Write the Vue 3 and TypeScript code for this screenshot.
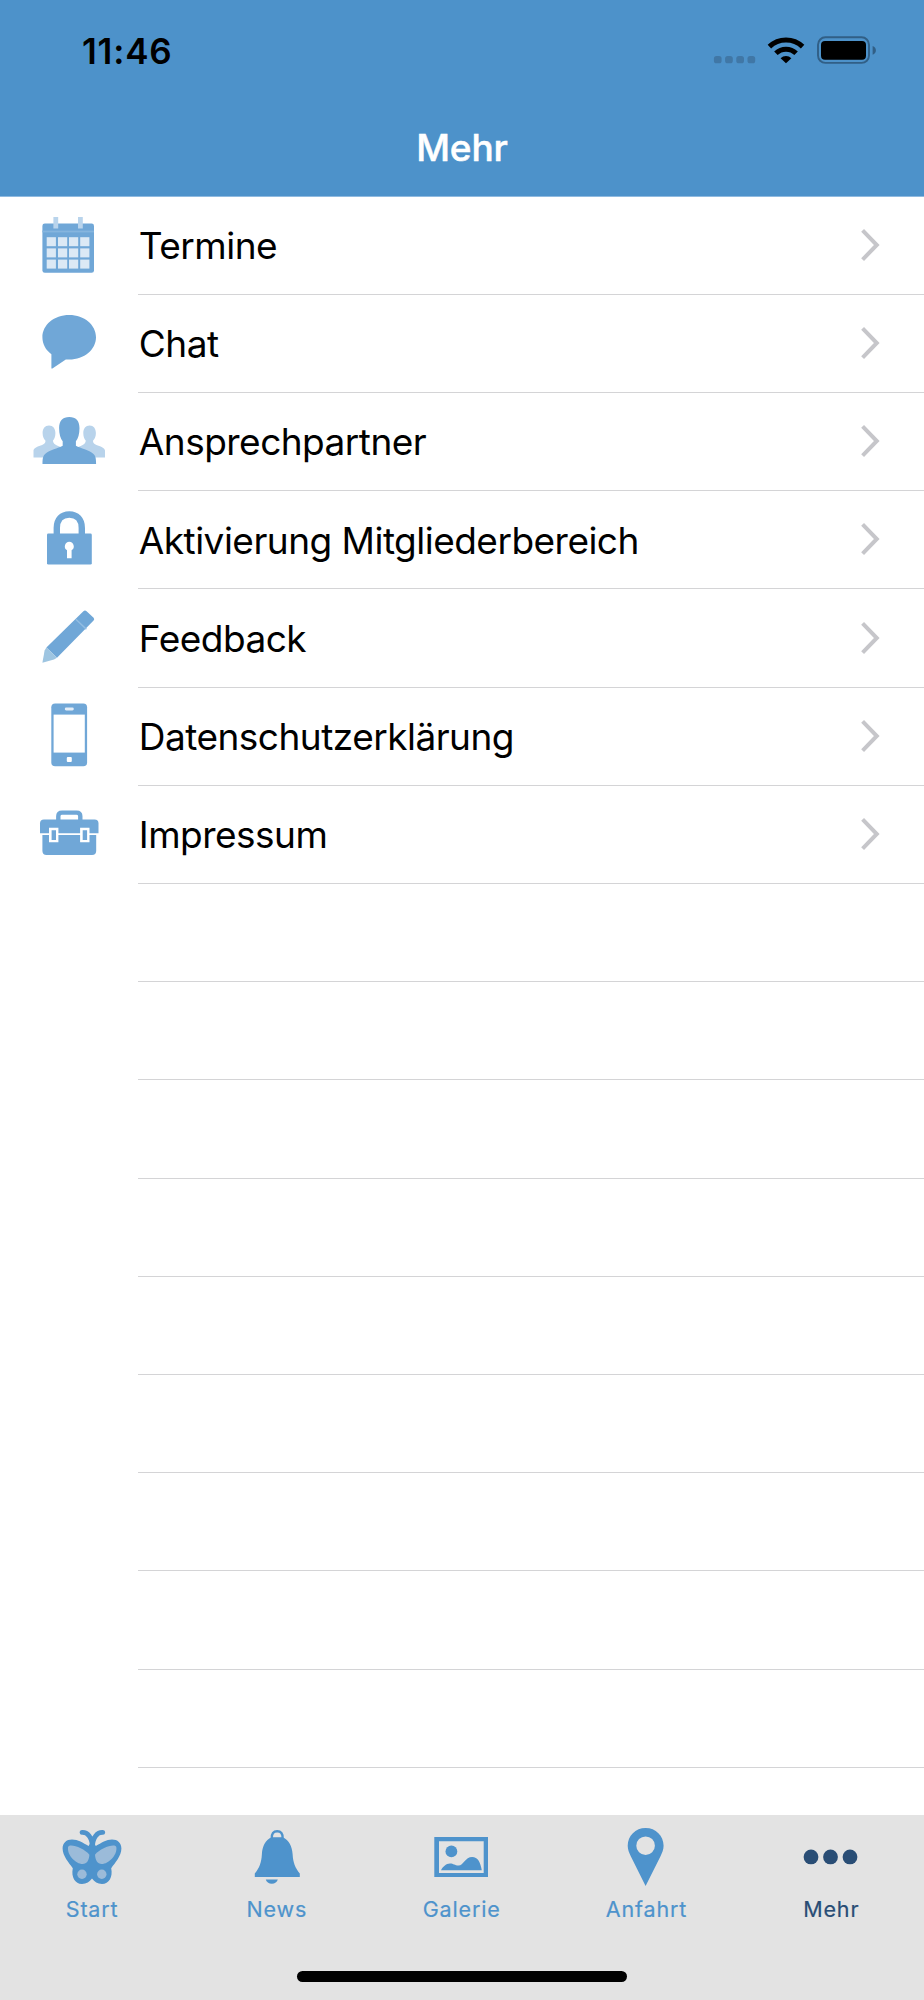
<script setup lang="ts">
interface Row {
  icon: string
  label: string
}

interface Tab {
  icon: string
  label: string
  active?: boolean
}

const rows: Row[] = [
  { icon: 'calendar', label: 'Termine' },
  { icon: 'chat', label: 'Chat' },
  { icon: 'people', label: 'Ansprechpartner' },
  { icon: 'lock', label: 'Aktivierung Mitgliederbereich' },
  { icon: 'pencil', label: 'Feedback' },
  { icon: 'phone', label: 'Datenschutzerklärung' },
  { icon: 'case', label: 'Impressum' },
]

const emptyRows = 9

const tabs: Tab[] = [
  { icon: 'butterfly', label: 'Start' },
  { icon: 'bell', label: 'News' },
  { icon: 'picture', label: 'Galerie' },
  { icon: 'pin', label: 'Anfahrt' },
  { icon: 'more', label: 'Mehr', active: true },
]

const cellColumns = [46.7, 58, 69, 80.2]
const cellRows = [40.2, 51.4, 62.6]
</script>

<template>
  <div class="screen">
    <header class="header">
      <div class="status">
        <span class="time">11:46</span>
        <svg class="indicators" viewBox="710 30 170 40" width="170" height="40">
          <g fill="#4077a6">
            <rect x="713.9" y="55.9" width="7.7" height="7.4" rx="2.6" />
            <rect x="725.1" y="55.9" width="7.7" height="7.4" rx="2.6" />
            <rect x="736.3" y="55.9" width="7.7" height="7.4" rx="2.6" />
            <rect x="747.5" y="55.9" width="7.7" height="7.4" rx="2.6" />
          </g>
          <g fill="none" stroke="#000" stroke-width="5">
            <path d="M769.4 46.6a24 24 0 0 1 33.2 0" />
            <path d="M775.9 53.3a14.6 14.6 0 0 1 20.2 0" />
          </g>
          <path d="M780.6 58.2a8 8 0 0 1 10.8 0L786 63.3z" />
          <rect x="818" y="37.3" width="51" height="25.6" rx="7.4" fill="none" stroke="#315f86" stroke-width="1.9" />
          <rect x="821" y="41" width="45" height="18.8" rx="4" />
          <path d="M872.6 45.9c4.4 1.6 4.4 7.2 0 8.8z" fill="#315f86" />
        </svg>
      </div>
      <h1 class="title">Mehr</h1>
    </header>

    <main class="list">
      <div v-for="row in rows" :key="row.label" class="row">
        <svg class="icon" viewBox="0 0 138 98.2" width="138" height="98.2" fill="#70a7d7">
          <template v-if="row.icon === 'calendar'">
            <rect x="42.4" y="26.6" width="51.6" height="49.2" rx="2.4" />
            <rect x="42.4" y="33.6" width="51.6" height="1.8" fill="#86b5de" />
            <path d="M53.4 20h4.8v11.4h-4.8zM78 20h4.8v11.4H78z" fill="#b9d4ec" />
            <template v-for="y in cellRows" :key="y">
              <rect v-for="x in cellColumns" :key="x" :x="x" :y="y" width="9.2" height="9" fill="#dce9f5" />
            </template>
          </template>
          <template v-else-if="row.icon === 'chat'">
            <path d="M69.2 20C84.4 20 96 30 96 42.3S84.4 64.6 69.2 64.6h-3.4L52.4 73.4 51.4 73.4V59.2C45.8 55.2 42.4 49.3 42.4 42.3 42.4 30 54 20 69.2 20z" />
          </template>
          <template v-else-if="row.icon === 'people'">
            <path d="M49 32.4c4 0 6.4 3 6.4 7.6 0 3.6-1 6-2.4 7.6 0 3.6 3 4.8 9 7.2V64.6H33.5v-7c0-3 5-4.4 8.6-5.7 2.8-1 3.6-2.4 3.3-4.3-1.6-1.6-2.8-4-2.8-7.6 0-4.6 2.4-7.6 6.4-7.6z" fill="#b8d3eb" />
            <path d="M89.7 32.4c-4 0-6.4 3-6.4 7.6 0 3.6 1 6 2.4 7.6 0 3.6-3 4.8-9 7.2V64.6H105v-7c0-3-5-4.4-8.6-5.7-2.8-1-3.6-2.4-3.3-4.3 1.6-1.6 2.8-4 2.8-7.6 0-4.6-2.4-7.6-6.2-7.6z" fill="#b8d3eb" />
            <path d="M69.3 24c6.6 0 10.2 3.8 10.2 11 0 6-1.4 10.6-3.6 13.2v4.6c4.8 2.8 13 4 17.6 8.2 2 1.9 2.6 4 2.6 10H42.5c0-6 .6-8.1 2.6-10 4.6-4.2 12.8-5.4 17.6-8.2v-4.6c-2.2-2.6-3.6-7.2-3.6-13.2 0-7.2 3.6-11 10.2-11z" />
          </template>
          <template v-else-if="row.icon === 'lock'">
            <path d="M56.8 45V37c0-8.6 5-13.5 12.5-13.5S81.8 28.4 81.8 37v8" fill="none" stroke="#70a7d7" stroke-width="6.4" />
            <rect x="47" y="42.5" width="44.8" height="31.1" rx="1.4" />
            <path d="M69.3 50.8a4.6 4.6 0 0 1 2.3 8.5v7.9H67v-7.9a4.6 4.6 0 0 1 2.3-8.5z" fill="#fff" />
          </template>
          <template v-else-if="row.icon === 'pencil'">
            <path d="M83.4 22.2q1.6-1.4 3.2 0l7 6.6q1.2 1.6 0 2.8L57 68.8 46.4 58.6z" />
            <path d="M75.8 30.2l10.6 10" stroke="#93bde2" stroke-width="1.5" />
            <path d="M46.4 58.6L57 68.8l-3 1.8-11.6 3.2 2.2-12.4z" fill="#9ec5e1" />
          </template>
          <template v-else-if="row.icon === 'phone'">
            <rect x="51.3" y="15.4" width="35.8" height="62.9" rx="3.8" />
            <rect x="53.6" y="26.6" width="31.2" height="38" fill="#fff" />
            <rect x="64.8" y="19.6" width="9" height="2.8" rx="1.4" fill="#e4eef8" />
            <rect x="66.8" y="69" width="5" height="5" rx="1" fill="#fff" />
          </template>
          <template v-else>
            <path d="M58.3 34.6v-4.4q0-3.6 3.8-3.6h14.4q3.8 0 3.8 3.6v4.4" fill="none" stroke="#70a7d7" stroke-width="4.4" />
            <path d="M44 33.4h50.5q4 0 4 4v9.8H40v-9.8q0-4 4-4z" />
            <path d="M42.4 48.9h53.8v15.9q0 4.2-4.2 4.2H46.6q-4.2 0-4.2-4.2z" />
            <path d="M49 41.7h9.4v14.6H49zM80.1 41.7h9.4v14.6h-9.4z" fill="#fff" />
            <path d="M51.6 44.2H56v9.8h-4.4zM82.7 44.2h4.4v9.8h-4.4z" />
          </template>
        </svg>
        <div class="cell">
          <span class="label">{{ row.label }}</span>
          <svg class="chevron" viewBox="0 0 20 34" width="20" height="34">
            <path d="M2.6 2.4L16.8 17 2.6 31.6" fill="none" stroke="#c6c6ca" stroke-width="4" />
          </svg>
        </div>
      </div>
      <div v-for="n in emptyRows" :key="n" class="row">
        <div class="cell cell-empty"></div>
      </div>
    </main>

    <nav class="tabbar">
      <div v-for="tab in tabs" :key="tab.label" class="tab" :class="{ active: tab.active }">
        <svg viewBox="0 0 64 64" width="64" height="64" fill="currentColor">
          <template v-if="tab.icon === 'butterfly'">
            <path d="M22 6.4C27.400 6 31.800 11 32.400 20 33 11 37.400 6 42.800 6.400" fill="none" stroke="currentColor" stroke-width="4.8" stroke-linecap="round" />
            <path d="M32.4 13.5l3.4 6.5C41.4 17 46.4 13.6 52 13.6c5.6 0 9.4 3.4 9.4 9C61.4 30 55 37 51.2 42.2 53 51 49 58 42 58c-4.6 0-7.4-1.8-10-5.4C29.400 56.2 26.600 58 22 58c-7 0-11-7-9.2-15.8C9 37 2.6 30 2.6 22.6c0-5.6 3.8-9 9.4-9 6 0 11 3.4 16.6 6.4z" />
            <path d="M8 21.5c.6-5 16 .6 21.4 7.2C29 34 27 38 22.6 38 16 38 7.2 29.4 8 21.5zM56.4 21.5c-.6-5-16 .6-21.4 7.2C35.4 34 37.4 38 41.8 38 48.4 38 57.2 29.4 56.4 21.5z" fill="#9bbbd9" />
            <circle cx="22" cy="48.2" r="4.7" fill="#9bbbd9" />
            <circle cx="41.8" cy="48.2" r="4.7" fill="#9bbbd9" />
          </template>
          <template v-else-if="tab.icon === 'bell'">
            <path d="M26.8 12.4C26.4 7.4 28.6 5.2 32.2 5.2s5.8 2.2 5.4 7.2" fill="none" stroke="currentColor" stroke-width="2.4" />
            <path d="M26.4 11.3h11.4C44 14.4 47 20 47.6 28c.5 9 2.6 13.6 7.2 19.6v3.3H9.8v-3.3C14.4 41.6 16.4 37 16.9 28 17.4 20 20.4 14.4 26.4 11.3z" />
            <path d="M20.8 53.5h12c-.6 2.7-3 4.2-6 4.2s-5.4-1.5-6-4.2z" />
          </template>
          <template v-else-if="tab.icon === 'picture'">
            <path fill-rule="evenodd" d="M4.3 11H58v40H4.3zM9 15.3V46.9H53.7V15.3z" />
            <circle cx="21.4" cy="25.4" r="5.9" />
            <path d="M11 44.2c1.6-3.2 5-6.7 9-6.7 3.6 0 4.6 2 8.6 2 4.8 0 6.6-8.5 13.6-8.5 5.6 0 8.2 5 9.6 13.2z" />
          </template>
          <template v-else-if="tab.icon === 'pin'">
            <path fill-rule="evenodd" d="M30.6 2c10.2 0 18 7.8 18 17.8 0 4-1.5 7.2-3.2 10.6L30.6 60 15.9 30.4c-1.7-3.4-3.2-6.6-3.2-10.6C12.7 9.8 20.5 2 30.6 2zM30.6 10.4a9.3 9.3 0 1 0 0 18.6 9.3 9.3 0 1 0 0-18.6z" />
          </template>
          <template v-else>
            <circle cx="11" cy="30.9" r="7.4" />
            <circle cx="30.5" cy="30.9" r="7.4" />
            <circle cx="50" cy="30.9" r="7.4" />
          </template>
        </svg>
        <span class="tab-label">{{ tab.label }}</span>
      </div>
      <div class="home"></div>
    </nav>
  </div>
</template>

<style>
body {
  background: #fff;
}
</style>

<style scoped>
.screen {
  display: flex;
  flex-direction: column;
  width: 924px;
  height: 2000px;
  overflow: hidden;
  background: #fff;
  color: #000;
  font-family: Inter, "Liberation Sans", sans-serif;
}

.header {
  box-sizing: border-box;
  flex: none;
  height: 197px;
  background: #4d92ca;
  border-bottom: 1px solid #8fbae0;
}

.status {
  display: flex;
  justify-content: space-between;
  height: 100px;
  padding: 30px 44px 0 82px;
  box-sizing: border-box;
}

.time {
  font-size: 35px;
  line-height: 42px;
  font-weight: 600;
  letter-spacing: 0.8px;
}

.title {
  margin: 0;
  font-size: 37px;
  line-height: 46px;
  padding: 25px 0 0 0;
  font-weight: 500;
  -webkit-text-stroke: 0.5px #fff;
  letter-spacing: -0.1px;
  color: #fff;
  text-align: center;
}

.list {
  flex: 1;
  min-height: 0;
  margin-top: -0.3px;
}

.row {
  display: flex;
  height: 98.2px;
}

.icon {
  flex: none;
}

.cell {
  flex: 1;
  display: flex;
  align-items: center;
  justify-content: space-between;
  box-sizing: border-box;
  padding-right: 44px;
  border-bottom: 1px solid #d4d4d6;
}

.cell-empty {
  margin-left: 138px;
}

.label {
  padding: 1.6px 0 0 0.8px;
  font-size: 37px;
  line-height: 46px;
  letter-spacing: -0.52px;
  white-space: nowrap;
}

.chevron {
  margin-bottom: 1px;
}

.tabbar {
  position: relative;
  flex: none;
  display: flex;
  height: 185.3px;
  background: #e3e3e3;
}

.tab {
  flex: 1;
  display: flex;
  flex-direction: column;
  align-items: center;
  padding-top: 11.3px;
  color: #4e93cc;
}

.tab.active {
  color: #294d75;
}

.tab-label {
  margin: 6px 0.6px 0 0;
  font-size: 21.5px;
  line-height: 26px;
  font-weight: 400;
  -webkit-text-stroke: 0.2px currentColor;
  letter-spacing: 0.85px;
}

.home {
  position: absolute;
  left: 297px;
  bottom: 18.3px;
  width: 330px;
  height: 11.2px;
  border-radius: 6px;
  background: #000;
}
</style>
